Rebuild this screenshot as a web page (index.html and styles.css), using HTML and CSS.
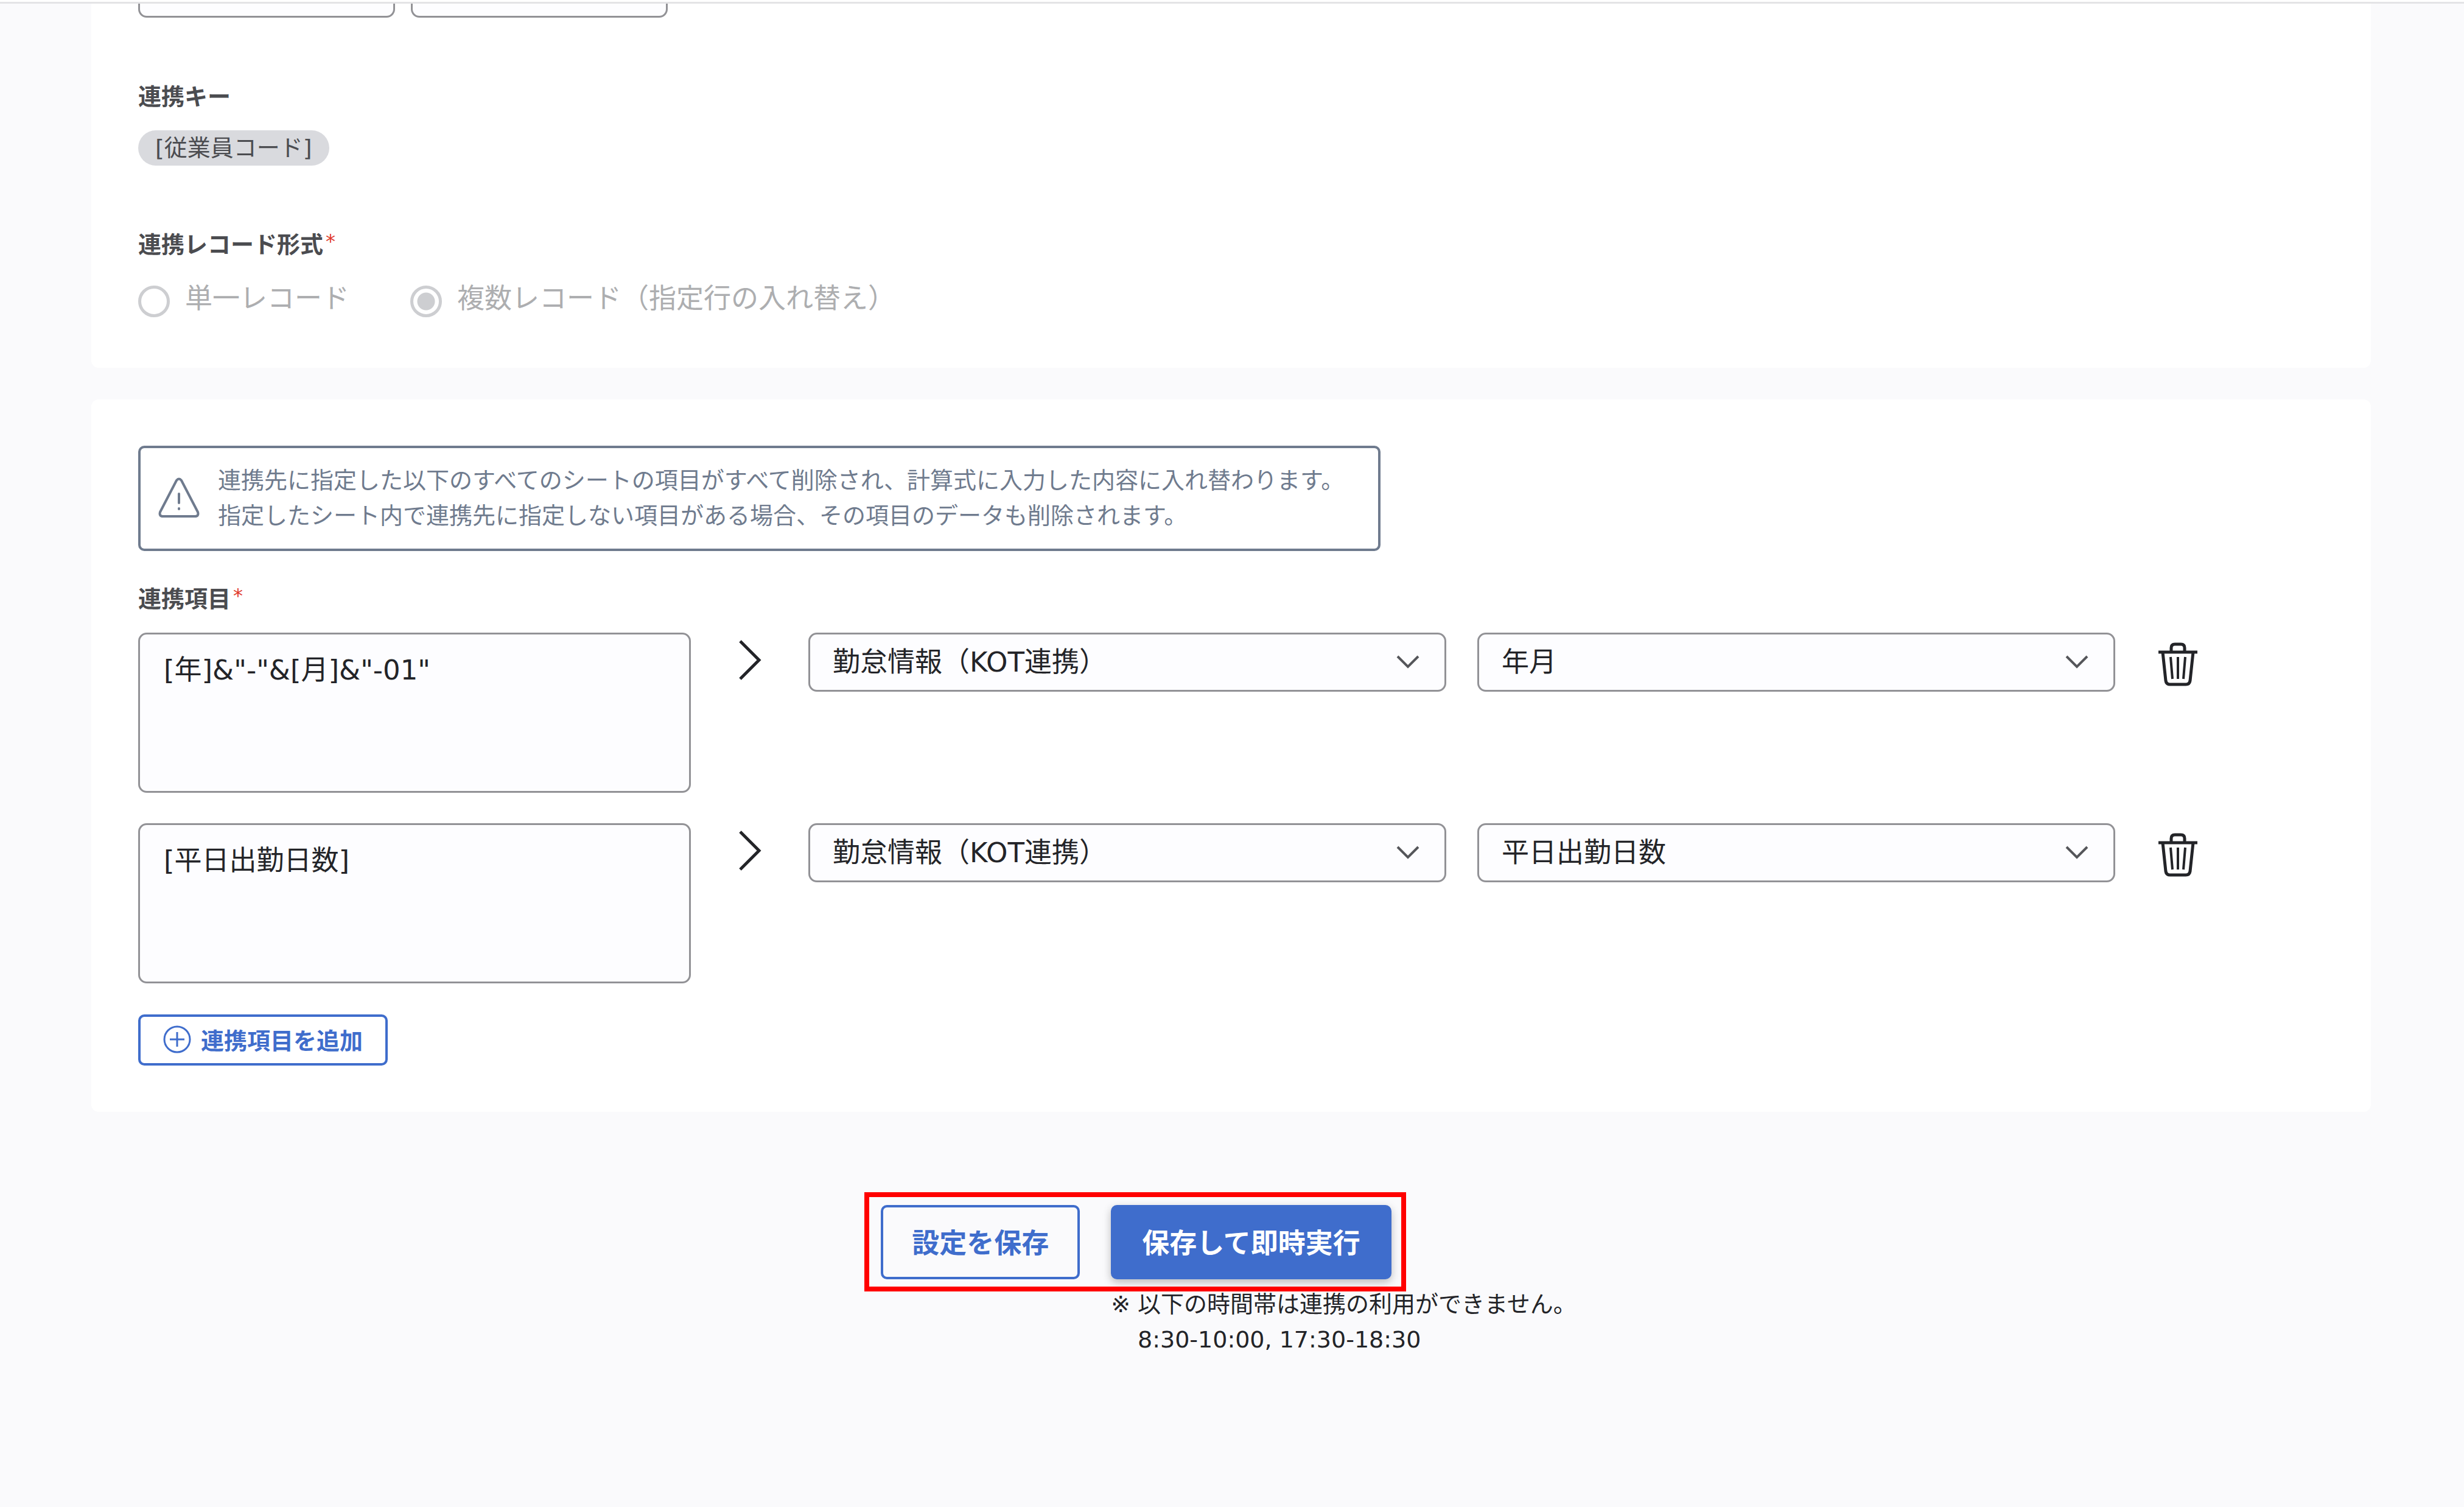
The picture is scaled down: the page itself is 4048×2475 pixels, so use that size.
FILE: index.html
```html
<!DOCTYPE html>
<html lang="ja">
<head>
    <meta charset="UTF-8" />
    <meta name="viewport" content="width=device-width, initial-scale=1.0" />
    <title>連携設定</title>
    <link rel="stylesheet" href="styles.css">
</head>
<body>
    <header class="topbar"></header>
    <main class="page">
        <!-- KEY / RECORD TYPE -->
        <section class="card card-key">
            <div class="top-fields">
                <input class="field" type="text" aria-label="連携元">
                <input class="field" type="text" aria-label="連携先">
            </div>
            <h2 class="label">連携キー</h2>
            <span class="tag">[従業員コード]</span>
            <h2 class="label">連携レコード形式<span class="required">*</span></h2>
            <div class="radios">
                <label class="radio"><input type="radio" name="record" disabled>単一レコード</label>
                <label class="radio"><input type="radio" name="record" checked disabled>複数レコード（指定行の入れ替え）</label>
            </div>
        </section>

        <!-- MAPPING -->
        <section class="card card-items">
            <div class="alert">
                <svg class="alert-icon" viewBox="0 0 68 68" fill="none" stroke="currentColor" stroke-width="4" stroke-linecap="round" stroke-linejoin="round">
                    <path d="M30 5 Q34 0 38 5 L65 57 Q67 64 60 64 H8 Q1 64 3 57 Z"/>
                    <path d="M34 27 V42 M34 51 V52"/>
                </svg>
                <p>連携先に指定した以下のすべてのシートの項目がすべて削除され、計算式に入力した内容に入れ替わります。<br>指定したシート内で連携先に指定しない項目がある場合、その項目のデータも削除されます。</p>
            </div>
            <h2 class="label">連携項目<span class="required">*</span></h2>
            <div class="rows">
                <div class="row">
                    <textarea class="field" aria-label="計算式 1">[年]&amp;"-"&amp;[月]&amp;"-01"</textarea>
                    <svg class="arrow" viewBox="0 0 40 70" fill="none" stroke="currentColor" stroke-width="5"><path d="M4 4 L35 35 L4 66"/></svg>
                    <div class="select">
                        <select class="field" aria-label="シート 1"><option>勤怠情報（KOT連携）</option></select>
                        <svg viewBox="0 0 40 24" fill="none" stroke="currentColor" stroke-width="4"><path d="M3 3 L20 20 L37 3"/></svg>
                    </div>
                    <div class="select">
                        <select class="field" aria-label="項目 1"><option>年月</option></select>
                        <svg viewBox="0 0 40 24" fill="none" stroke="currentColor" stroke-width="4"><path d="M3 3 L20 20 L37 3"/></svg>
                    </div>
                    <button class="trash" type="button" aria-label="削除">
                        <svg viewBox="0 0 64 72" fill="none" stroke="currentColor" stroke-width="5">
                            <path d="M0 16 H64 M21 16 V9 Q21 3 27 3 H37 Q43 3 43 9 V16"/>
                            <path d="M7 16 L12 63 Q13 69 19 69 H45 Q51 69 52 63 L57 16"/>
                            <path d="M20 24 L23 60 M32 24 V60 M44 24 L41 60" stroke-width="4"/>
                        </svg>
                    </button>
                </div>
                <div class="row">
                    <textarea class="field" aria-label="計算式 2">[平日出勤日数]</textarea>
                    <svg class="arrow" viewBox="0 0 40 70" fill="none" stroke="currentColor" stroke-width="5"><path d="M4 4 L35 35 L4 66"/></svg>
                    <div class="select">
                        <select class="field" aria-label="シート 2"><option>勤怠情報（KOT連携）</option></select>
                        <svg viewBox="0 0 40 24" fill="none" stroke="currentColor" stroke-width="4"><path d="M3 3 L20 20 L37 3"/></svg>
                    </div>
                    <div class="select">
                        <select class="field" aria-label="項目 2"><option>平日出勤日数</option></select>
                        <svg viewBox="0 0 40 24" fill="none" stroke="currentColor" stroke-width="4"><path d="M3 3 L20 20 L37 3"/></svg>
                    </div>
                    <button class="trash" type="button" aria-label="削除">
                        <svg viewBox="0 0 64 72" fill="none" stroke="currentColor" stroke-width="5">
                            <path d="M0 16 H64 M21 16 V9 Q21 3 27 3 H37 Q43 3 43 9 V16"/>
                            <path d="M7 16 L12 63 Q13 69 19 69 H45 Q51 69 52 63 L57 16"/>
                            <path d="M20 24 L23 60 M32 24 V60 M44 24 L41 60" stroke-width="4"/>
                        </svg>
                    </button>
                </div>
            </div>
            <button class="add" type="button">
                <svg viewBox="0 0 46 46" fill="none" stroke="currentColor" stroke-width="3"><circle cx="23" cy="23" r="21"/><path d="M23 11 V35 M11 23 H35"/></svg>
                連携項目を追加
            </button>
        </section>

        <!-- ACTIONS -->
        <div class="actions">
            <span class="highlight"></span>
            <button class="btn save" type="button">設定を保存</button>
            <div class="run-group">
                <button class="btn run" type="button">保存して即時実行</button>
                <p class="note"><span class="mark">※</span><span>以下の時間帯は連携の利用ができません。<br>8:30-10:00, 17:30-18:30</span></p>
            </div>
        </div>
    </main>
</body>
</html>
```
FILE: styles.css
```css
* {
    box-sizing: border-box;
}
body {
    margin: 0;
    background: #fafafc;
    color: #232428;
    font-family: "DejaVu Sans", "Noto Sans CJK JP", sans-serif;
    font-size: 38px;
    line-height: 58px;
}
button, input, select, textarea {
    font-family: inherit;
    color: inherit;
}
button {
    cursor: pointer;
}
h2, p {
    margin: 0;
}
.topbar {
    position: relative;
    z-index: 1;
    height: 6px;
    background: #fff;
    border-bottom: 3px solid #e4e4e6;
}
.page {
    padding: 0 153px 150px 150px;
}
.card {
    background: #fff;
    border-radius: 12px;
    padding: 76px 77px;
}
.card-key {
    padding-top: 0;
    padding-bottom: 81px;
    margin-bottom: 52px;
    border-radius: 0 0 12px 12px;
    overflow: hidden;
}
.field {
    display: block;
    width: 100%;
    height: 97px;
    padding: 0 37px;
    background: #fdfdff;
    border: 3px solid #929296;
    border-radius: 14px;
    font-size: 45px;
}
/* scrolled partly under the top bar */
.top-fields {
    display: flex;
    gap: 26px;
    margin-top: -74px;
}
.top-fields .field {
    width: 422px;
}
.label {
    font-size: 38px;
    font-weight: bold;
    color: #4b4c50;
}
.card-key .label {
    margin-top: 101px;
}
.required {
    margin-left: 4px;
    font-size: 32px;
    font-weight: normal;
    line-height: 1;
    vertical-align: 8px;
    color: #e0392b;
}
.tag {
    display: block;
    width: fit-content;
    margin-top: 26px;
    padding: 0 28px;
    background: #d9dade;
    border-radius: 29px;
    color: #4b4c50;
}
.radios {
    display: flex;
    gap: 100px;
    margin-top: 28px;
}
.radio {
    display: flex;
    gap: 25px;
    font-size: 45px;
    line-height: 64px;
    color: #adaeb0;
}
.radio input {
    appearance: none;
    width: 52px;
    height: 52px;
    margin: 10px 0 0;
    border: 5px solid #cdced1;
    border-radius: 50%;
    background: #fff;
}
.radio input:checked {
    background: radial-gradient(circle, #cdced1 14px, #fff 15px);
}

.alert {
    display: flex;
    align-items: center;
    gap: 30px;
    width: fit-content;
    padding: 24px 56px 25px 29px;
    border: 4px solid #6f7b8e;
    border-radius: 10px;
    color: #6f7b8e;
}
.alert-icon {
    flex: none;
    width: 68px;
    height: 68px;
}
.card-items .label {
    margin: 50px 0 26px;
}
.rows {
    display: grid;
    gap: 50px;
    padding-right: 188px;
}
.row {
    display: grid;
    grid-template-columns: 908fr 91px 1048fr 1048fr 104px;
    gap: 51px;
    align-items: start;
}
textarea.field {
    height: 263px;
    padding: 27px 39px;
    line-height: 64px;
    resize: none;
}
.arrow {
    justify-self: center;
    width: 40px;
    height: 70px;
    margin-top: 10px;
}
.select {
    position: relative;
}
.select select {
    appearance: none;
}
.select svg {
    position: absolute;
    right: 43px;
    top: 36px;
    width: 40px;
    height: 24px;
    color: #55565a;
    pointer-events: none;
}
.trash {
    display: grid;
    place-items: center;
    height: 104px;
    padding: 0;
    border: none;
    background: none;
}
.trash svg {
    width: 64px;
    height: 72px;
}
.add {
    display: flex;
    align-items: center;
    gap: 16px;
    height: 84px;
    margin-top: 51px;
    padding: 0 37px 3px;
    background: #fff;
    border: 4px solid #3f6dcc;
    border-radius: 10px;
    color: #3f6dcc;
    font-size: 38px;
    font-weight: bold;
}
.add svg {
    width: 46px;
    height: 46px;
}

.actions {
    position: relative;
    display: flex;
    align-items: flex-start;
    gap: 51px;
    width: fit-content;
    margin: 153px auto 0;
}
.highlight {
    position: absolute;
    left: -27px;
    top: -21px;
    width: 890px;
    height: 163px;
    border: 8px solid #f00;
    pointer-events: none;
}
.btn {
    height: 122px;
    padding: 0 47px 3px;
    border: 4px solid #3f6dcc;
    border-radius: 10px;
    background: #fafafc;
    color: #3f6dcc;
    font-size: 45px;
    font-weight: bold;
}
.run {
    background: #3f6dcc;
    color: #fff;
    box-shadow: 0 5px 14px rgba(0, 0, 0, 0.25);
}
.note {
    position: relative;
    display: flex;
    gap: 12px;
    margin-top: 12px;
    padding-right: 8px;
}
```
